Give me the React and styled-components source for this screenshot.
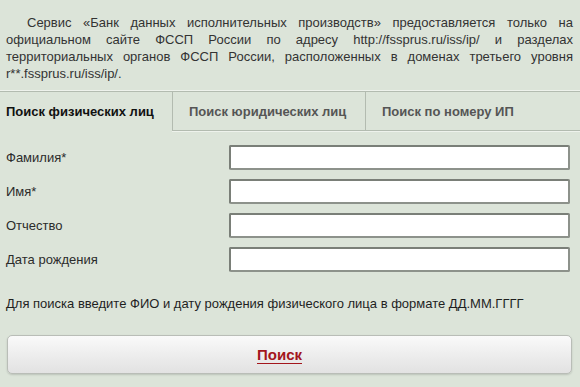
import React from "react";
import styled, { createGlobalStyle } from "styled-components";

const GlobalStyle = createGlobalStyle`
  html, body {
    margin: 0;
    padding: 0;
    background: #dce4d9;
  }
  body {
    font-family: "Liberation Sans", Arial, sans-serif;
    color: #2b2b2b;
  }
`;

const Page = styled.div`
  width: 580px;
  height: 387px;
  overflow: hidden;
  background: #dce4d9;
`;

//верхний абзац, выровнен по ширине
const Notice = styled.p`
  margin: 0;
  padding: 14px 7px 0 6px;
  font-size: 13px;
  line-height: 17px;
  text-align: justify;
  text-indent: 21px;
  color: #333;
`;

const Tabs = styled.div`
  display: grid;
  grid-template-columns: 172px 193px 1fr;
  margin-top: 9px;
  border-top: 1px solid #b3bbb0;
  box-shadow: 0 -1px 0 #eef2ec;
`;

const Tab = styled.div`
  height: 38px;
  display: flex;
  align-items: center;
  padding-left: ${(p) => (p.$active ? "6px" : "16px")};
  font-size: 13px;
  font-weight: bold;
  color: ${(p) => (p.$active ? "#111" : "#555")};
  border-left: ${(p) => (p.$first ? "none" : "1px solid #b3bbb0")};
  border-bottom: ${(p) => (p.$active ? "1px solid transparent" : "1px solid #b3bbb0")};
  box-shadow: ${(p) => (p.$active ? "none" : "0 1px 0 #eef2ec")};
`;

const Form = styled.div`
  display: flex;
  flex-direction: column;
  gap: 9px;
  margin-top: 14px;
`;

const Row = styled.div`
  display: flex;
  align-items: center;
  padding-left: 6px;
`;

const Label = styled.label`
  width: 223px;
  font-size: 13px;
  color: #2b2b2b;
`;

const Input = styled.input`
  box-sizing: border-box;
  width: 341px;
  height: 25px;
  margin: 0;
  padding: 2px 4px;
  background: #fff;
  border: 2px solid #7a7f78;
  border-right-color: #8d928b;
  border-bottom-color: #8d928b;
  border-radius: 2px;
  outline: none;
`;

const Hint = styled.div`
  margin-top: 23px;
  padding-left: 6px;
  font-size: 13px;
  line-height: 17px;
  color: #1f1f1f;
`;

const SearchButton = styled.button`
  display: flex;
  align-items: center;
  justify-content: center;
  box-sizing: border-box;
  width: 565px;
  height: 39px;
  margin: 23px 0 0 7px;
  padding: 0 20px 0 0;
  background: linear-gradient(#fafafa, #ebebeb 60%, #e2e2e2);
  border: 1px solid #b9bdb7;
  border-radius: 5px;
  box-shadow: 0 1px 2px rgba(0, 0, 0, 0.15);
  font-family: "Liberation Sans", Arial, sans-serif;
  font-size: 15px;
  font-weight: bold;
  color: #a3161c;
  text-decoration: underline;
  text-underline-offset: 3px;
  cursor: pointer;
`;

const fields = ["Фамилия*", "Имя*", "Отчество", "Дата рождения"];

function App() {
  return (
    <Page>
      <GlobalStyle />
      <Notice>
        Сервис «Банк данных исполнительных производств» предоставляется только
        на официальном сайте ФССП России по адресу http://fssprus.ru/iss/ip/ и
        разделах территориальных органов ФССП России, расположенных в доменах
        третьего уровня r**.fssprus.ru/iss/ip/.
      </Notice>
      <Tabs>
        <Tab $active $first>
          Поиск физических лиц
        </Tab>
        <Tab>Поиск юридических лиц</Tab>
        <Tab>Поиск по номеру ИП</Tab>
      </Tabs>
      <Form>
        {fields.map((f) => (
          <Row key={f}>
            <Label>{f}</Label>
            <Input type="text" />
          </Row>
        ))}
      </Form>
      <Hint>
        Для поиска введите ФИО и дату рождения физического лица в формате
        ДД.ММ.ГГГГ
      </Hint>
      <SearchButton>Поиск</SearchButton>
    </Page>
  );
}

export default App;
